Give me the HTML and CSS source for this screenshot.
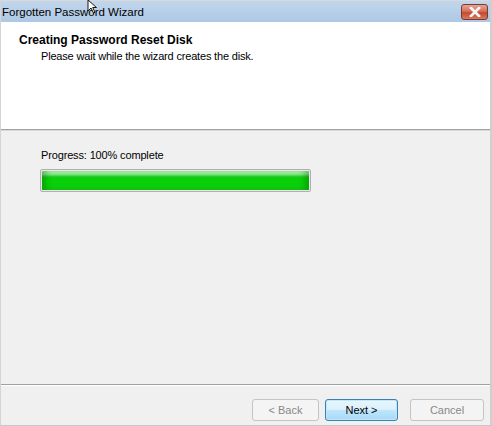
FILE: index.html
```html
<!DOCTYPE html>
<html>
<head>
<meta charset="utf-8">
<link rel="stylesheet" href="styles.css">
</head>
<body>
<div class="window">
  <div class="titlebar">
    <span class="title">Forgotten Password Wizard</span>
    <div class="close"><svg width="14" height="10" viewBox="0 0 14 10"><path d="M3 1 L11 9 M11 1 L3 9" stroke="#fff" stroke-width="2.6" stroke-linecap="square"/><path d="M3 1 L11 9 M11 1 L3 9" stroke="#f4f4f4" stroke-width="1.6"/></svg></div>
    <svg class="cursor" width="12" height="14" viewBox="0 0 12 14"><path d="M1 0 L1 11 L4 8 L6.5 13 L8 12.3 L5.7 7.5 L9.5 7.5 Z" fill="#fff" stroke="#000" stroke-width="0.9"/></svg>
  </div>
  <div class="header">
    <div class="h-title">Creating Password Reset Disk</div>
    <div class="h-sub">Please wait while the wizard creates the disk.</div>
  </div>
  <div class="body">
    <div class="label">Progress: 100% complete</div>
    <div class="progress"><div class="fill"></div></div>
  </div>
  <div class="footer">
    <button class="btn disabled">&lt; Back</button>
    <button class="btn default">Next &gt;</button>
    <button class="btn disabled cancel">Cancel</button>
  </div>
</div>
</body>
</html>
```
FILE: styles.css
```css
html, body { margin: 0; padding: 0; }
body { width: 492px; height: 426px; overflow: hidden; background: #f0f0f0; font-family: "Liberation Sans", Arial, sans-serif; font-size: 12px; color: #000; }
.window { width: 492px; height: 426px; display: flex; flex-direction: column; box-sizing: border-box; border-left: 1px solid #d4d4d4; border-right: 2px solid #cfcfcf; border-bottom: 1px solid #c8c8c8; position: relative; }
.titlebar { height: 22px; flex: none; background: linear-gradient(#c2d6ec, #b7cfe8 50%, #aec8e4); border-top: 1px solid #d9d9d9; box-sizing: border-box; display: flex; align-items: center; position: relative; }
.title { font-size: 11.5px; padding-left: 1px; color: #000; margin-top: 1px; }
.close { position: absolute; right: 2px; top: 3px; width: 27px; height: 16px; box-sizing: border-box; border: 1px solid #7a3a34; border-radius: 3px; background: linear-gradient(#e8a595, #d6705c 45%, #c44a33 55%, #d87a5e); display: flex; align-items: center; justify-content: center; }
.cursor { position: absolute; left: 86px; top: -1px; }
.header { height: 108px; flex: none; background: #fff; border-bottom: 1px solid #a0a0a0; box-shadow: 0 1px 0 #fff; box-sizing: border-box; }
.h-title { font-weight: bold; font-size: 12px; margin: 11px 0 0 18px; }
.h-sub { font-size: 11px; letter-spacing: -0.18px; margin: 3px 0 0 40px; }
.body { flex: 1; padding: 18px 0 0 39px; border-top: 1px solid #d9d9d9; border-bottom: 1px solid #a0a0a0; box-shadow: 0 1px 0 #fff; }
.label { font-size: 11px; letter-spacing: -0.15px; margin-left: 1px; margin-bottom: 8px; }
.progress { width: 271px; height: 23px; box-sizing: border-box; border: 1px solid #b0b0b0; border-radius: 2px; background: #e6e6e6; padding: 1px; }
.fill { height: 100%; border-radius: 1px; background: linear-gradient(#a8f0a8 0, #8ae88c 3px, #16c916 6px, #06d206 10px, #10c810 100%); box-shadow: inset 8px 0 6px -4px rgba(0,90,0,0.35), inset -8px 0 6px -4px rgba(0,90,0,0.35); }
.footer { height: 40px; flex: none; display: flex; align-items: flex-start; padding: 14px 0 0 251px; box-sizing: border-box; }
.btn { flex: none; font-family: inherit; font-size: 11px; width: 67px; height: 22px; box-sizing: border-box; border: 1px solid #adadad; border-radius: 3px; background: #f4f4f4; color: #000; padding: 0; }
.btn.disabled { color: #888; border-color: #c4c4c4; background: #f4f4f4; }
.btn.default { width: 73px; margin-left: 6px; border: 1px solid #3c7fb1; background: linear-gradient(#eaf6fd, #d9f0fc 50%, #bee6fd 51%, #a7d9f5); box-shadow: inset 0 0 0 1px #c0e8fb; }
.btn.cancel { width: 74px; margin-left: 12px; }
```
